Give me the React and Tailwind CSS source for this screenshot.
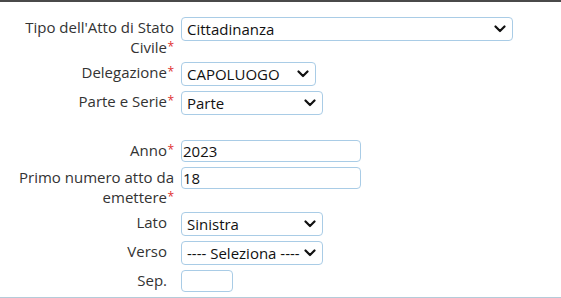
const Chevron = () => (
  <svg width="12" height="8" viewBox="0 0 12 8" className="absolute right-[6px] top-1/2 -translate-y-1/2 pointer-events-none">
    <path d="M1.5 1.5 L6 6 L10.5 1.5" fill="none" stroke="#111" strokeWidth="2.2" strokeLinecap="round" strokeLinejoin="round" />
  </svg>
);

function Select({ value, width }) {
  return (
    <div className={`relative h-[24px] ${width} border border-[#a9cce6] rounded-[4px] bg-white flex items-center pl-[5px] text-[15px] text-[#111]`}>
      <span className="leading-none">{value}</span>
      <Chevron />
    </div>
  );
}

function Input({ value, width }) {
  return (
    <div className={`h-[22px] ${width} border border-[#a9cce6] rounded-[4px] bg-white flex items-center pl-[1px] text-[15px] text-[#111]`}>
      <span className="leading-none">{value}</span>
    </div>
  );
}

function Row({ label, required, children }) {
  return (
    <div className="flex items-start mb-[5px]">
      <div className="w-[156px] ml-[18px] mr-[7px] text-right text-[15px] leading-[20px] text-[#333]">
        {label}
        <span className={`${required ? '' : 'invisible'} inline-block w-[7px] text-right text-[#e03030] text-[12px] leading-none align-top relative top-[4px]`}>*</span>
      </div>
      {children}
    </div>
  );
}

export default function App() {
  return (
    <div className="w-[561px] h-[298px] bg-white border-t-2 border-[#4a4a4a] border-b border-b-[#b5cbd9] font-['Open_Sans',sans-serif] pt-[15px]">
      <Row label="Tipo dell'Atto di Stato Civile" required>
        <Select value="Cittadinanza" width="w-[332px]" />
      </Row>
      <Row label="Delegazione" required>
        <Select value="CAPOLUOGO" width="w-[135px]" />
      </Row>
      <Row label="Parte e Serie" required>
        <Select value="Parte" width="w-[142px]" />
      </Row>
      <div className="h-[20px]" />
      <Row label="Anno" required>
        <Input value="2023" width="w-[180px]" />
      </Row>
      <Row label="Primo numero atto da emettere" required>
        <Input value="18" width="w-[180px]" />
      </Row>
      <Row label="Lato">
        <Select value="Sinistra" width="w-[142px]" />
      </Row>
      <Row label="Verso">
        <Select value="---- Seleziona ----" width="w-[142px]" />
      </Row>
      <Row label="Sep.">
        <Input value="" width="w-[52px]" />
      </Row>
    </div>
  );
}
